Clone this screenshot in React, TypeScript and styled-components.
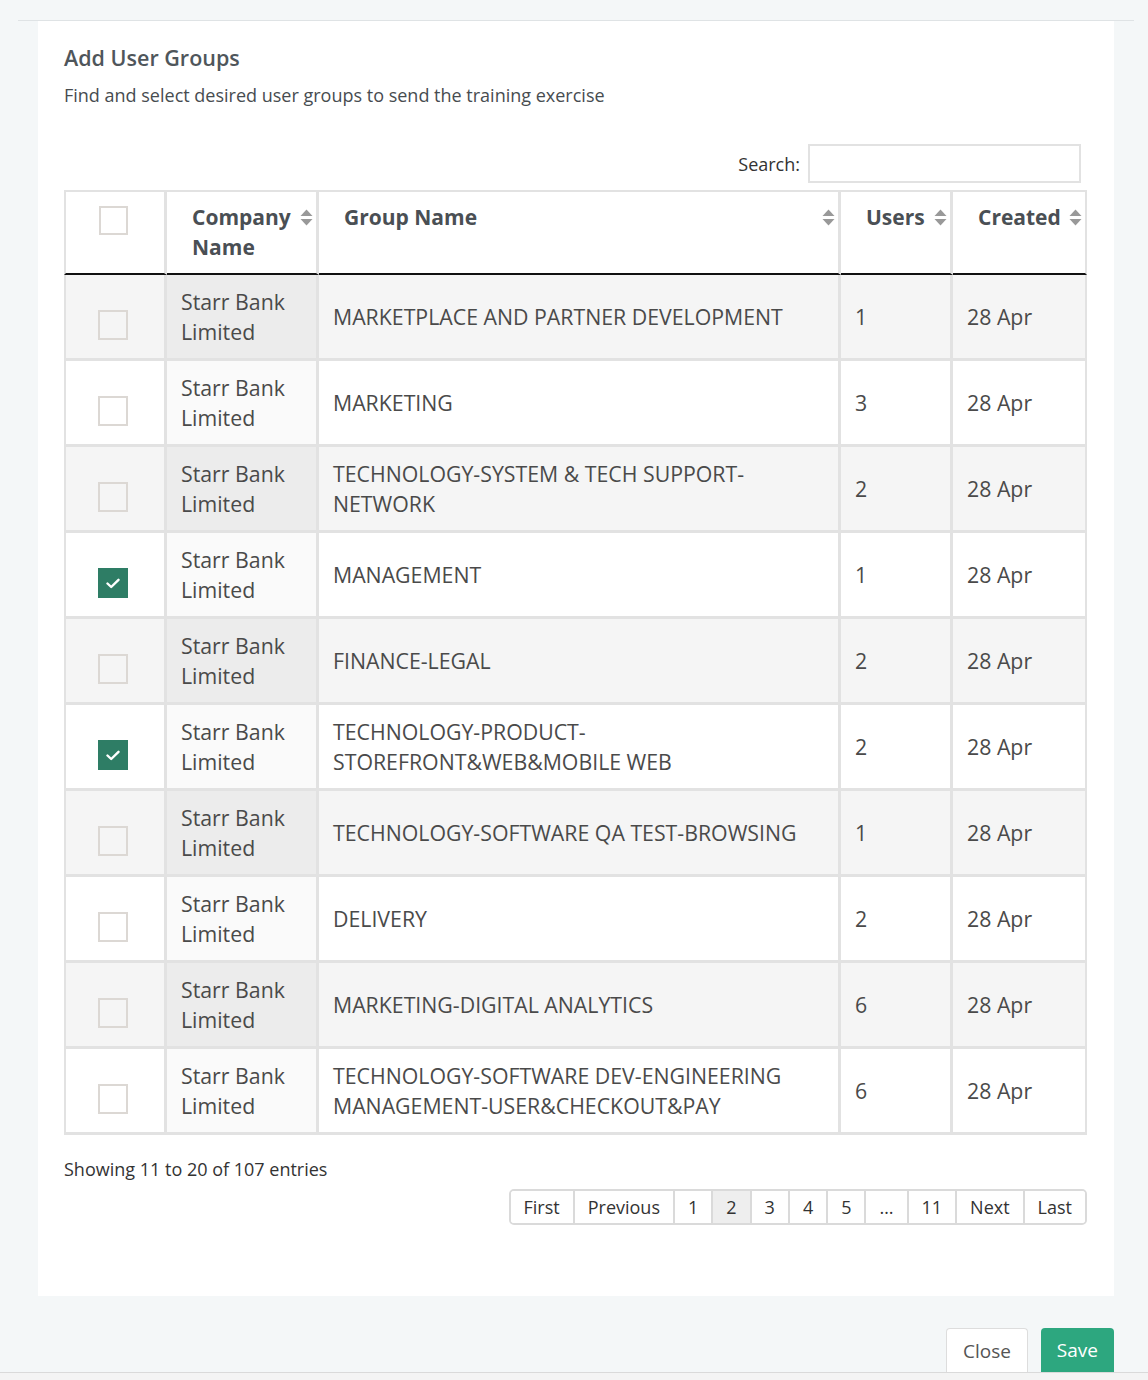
import React from "react";
import styled, { createGlobalStyle } from "styled-components";

const Global = createGlobalStyle`
  html, body { margin: 0; padding: 0; }
  body {
    background: #f4f7f8;
    font-family: "Open Sans", "Liberation Sans", sans-serif;
    color: #444;
  }
  * { box-sizing: border-box; }
`;

const Wrapper = styled.div`
  padding: 20px 14px 0 18px;
`;

const Frame = styled.div`
  border-top: 1px solid #dfe3e5;
  padding: 0 20px;
`;

const Panel = styled.div`
  background: #ffffff;
  padding: 22px 27px 71px 26px;
`;

const Title = styled.h2`
  margin: 0;
  font-size: 21.5px;
  line-height: 30px;
  font-weight: 600;
  color: #4f565b;
`;

const Subtitle = styled.p`
  margin: 10px 0 0;
  font-size: 18px;
  line-height: 24px;
  color: #474c50;
`;

const SearchRow = styled.div`
  display: flex;
  justify-content: flex-end;
  align-items: center;
  gap: 8px;
  margin-top: 37px;
  padding-right: 6px;
  font-size: 18px;
  color: #333;
`;

const SearchInput = styled.input`
  width: 273px;
  height: 39px;
  border: 2px solid #e2e2e2;
  background: #fff;
  outline: none;
  font-family: inherit;
`;

const Table = styled.table`
  margin-top: 7px;
  width: 1023px;
  table-layout: fixed;
  border-collapse: separate;
  border-spacing: 0;
  font-size: 21.3px;
`;

const Th = styled.th<{ $first?: boolean; $last?: boolean }>`
  position: relative;
  vertical-align: top;
  text-align: left;
  padding: 10px 24px 11px 25px;
  font-weight: 700;
  font-size: 21px;
  line-height: 30px;
  color: #4a4f54;
  border-top: 2px solid #e2e2e2;
  border-bottom: 2px solid #111;
  border-right: ${(p) => (p.$last ? "2px" : "3px")} solid #e2e2e2;
  border-left: ${(p) => (p.$first ? "2px solid #e2e2e2" : "none")};
`;

const CheckTh = styled(Th)`
  padding: 11px 4px 0 0;
  text-align: center;
`;

const HeadInner = styled.div`
  display: flex;
  align-items: flex-start;
  justify-content: space-between;
`;

const SortIcon = styled.svg`
  position: absolute;
  right: 3px;
  top: 17px;
`;

const Tr = styled.tr<{ $odd: boolean }>`
  background: ${(p) => (p.$odd ? "#f5f5f5" : "#ffffff")};
`;

const Td = styled.td<{ $first?: boolean; $last?: boolean; $sorted?: boolean; $odd?: boolean }>`
  vertical-align: middle;
  padding: 12px 14px 11px 14px;
  line-height: 30px;
  color: #4a4a4a;
  border-bottom: 3px solid #e2e2e2;
  border-right: ${(p) => (p.$last ? "2px" : "3px")} solid #e2e2e2;
  border-left: ${(p) => (p.$first ? "2px solid #e2e2e2" : "none")};
  background: ${(p) => (p.$sorted ? (p.$odd ? "#ececec" : "#fafafa") : "transparent")};
`;

const CheckTd = styled(Td)`
  text-align: center;
  padding: 12px 4px 11px 0;
`;

const Box = styled.span<{ $checked?: boolean; $head?: boolean }>`
  display: inline-flex;
  align-items: center;
  justify-content: center;
  width: ${(p) => (p.$head ? "29px" : "30px")};
  height: ${(p) => (p.$head ? "29px" : "30px")};
  margin-top: ${(p) => (p.$head ? "0" : "16px")};
  vertical-align: middle;
  border: ${(p) => (p.$checked ? "none" : "2px solid #dcd8d4")};
  background: ${(p) => (p.$checked ? "#2e7d65" : "transparent")};
`;

const Info = styled.div`
  margin-top: 22px;
  font-size: 18px;
  line-height: 24px;
  color: #333;
`;

const PagerRow = styled.div`
  display: flex;
  justify-content: flex-end;
  margin-top: 8px;
`;

const Pager = styled.div`
  display: flex;
  border: 2px solid #dadada;
  border-radius: 5px;
  overflow: hidden;
`;

const PageBtn = styled.span<{ $active?: boolean; $first?: boolean }>`
  display: inline-flex;
  align-items: center;
  justify-content: center;
  height: 32px;
  padding: 0 13px;
  font-size: 18px;
  color: #333;
  background: ${(p) => (p.$active ? "#eeeeee" : "#ffffff")};
  border-left: ${(p) => (p.$first ? "none" : "2px solid #dadada")};
`;

const Footer = styled.div`
  display: flex;
  justify-content: flex-end;
  align-items: flex-end;
  gap: 13px;
  height: 76px;
  padding-right: 34px;
`;

const Button = styled.button<{ $primary?: boolean }>`
  height: 44px;
  padding: 0 16px;
  font-family: inherit;
  font-size: 19px;
  border-radius: 4px 4px 0 0;
  border: ${(p) => (p.$primary ? "none" : "1px solid #dddddd")};
  border-bottom: none;
  background: ${(p) => (p.$primary ? "#2da77f" : "#ffffff")};
  color: ${(p) => (p.$primary ? "#ffffff" : "#555555")};
`;

const BottomStrip = styled.div`
  height: 8px;
  border-top: 1px solid #dadada;
  background: #f4f4f4;
`;

const Sort = () => (
  <SortIcon width="13" height="17" viewBox="0 0 13 17">
    <path d="M6.5 0.5 L12.5 7 L0.5 7 Z" fill="#999" />
    <path d="M6.5 16.5 L12.5 10 L0.5 10 Z" fill="#999" />
  </SortIcon>
);

const Check = () => (
  <svg width="14" height="11" viewBox="0 0 14 11">
    <path d="M1.5 5.5 L5.2 9 L12.5 1.8" stroke="#fff" strokeWidth="2.4" fill="none" strokeLinecap="round" strokeLinejoin="round" />
  </svg>
);

const rows = [
  { group: "MARKETPLACE AND PARTNER DEVELOPMENT", users: 1, checked: false },
  { group: "MARKETING", users: 3, checked: false },
  { group: "TECHNOLOGY-SYSTEM & TECH SUPPORT-NETWORK", users: 2, checked: false },
  { group: "MANAGEMENT", users: 1, checked: true },
  { group: "FINANCE-LEGAL", users: 2, checked: false },
  { group: "TECHNOLOGY-PRODUCT-STOREFRONT&WEB&MOBILE WEB", users: 2, checked: true },
  { group: "TECHNOLOGY-SOFTWARE QA TEST-BROWSING", users: 1, checked: false },
  { group: "DELIVERY", users: 2, checked: false },
  { group: "MARKETING-DIGITAL ANALYTICS", users: 6, checked: false },
  { group: "TECHNOLOGY-SOFTWARE DEV-ENGINEERING MANAGEMENT-USER&CHECKOUT&PAY", users: 6, checked: false },
];

const pages = ["First", "Previous", "1", "2", "3", "4", "5", "…", "11", "Next", "Last"];

export default function App() {
  return (
    <>
      <Global />
      <Wrapper>
        <Frame>
          <Panel>
            <Title>Add User Groups</Title>
            <Subtitle>Find and select desired user groups to send the training exercise</Subtitle>
            <SearchRow>
              <label>Search:</label>
              <SearchInput type="text" />
            </SearchRow>
            <Table>
              <colgroup>
                <col style={{ width: 103 }} />
                <col style={{ width: 152 }} />
                <col style={{ width: 522 }} />
                <col style={{ width: 112 }} />
                <col style={{ width: 134 }} />
              </colgroup>
              <thead>
                <tr>
                  <CheckTh $first>
                    <Box $head />
                  </CheckTh>
                  <Th>
                    <HeadInner>Company Name</HeadInner>
                    <Sort />
                  </Th>
                  <Th>
                    <HeadInner>Group Name</HeadInner>
                    <Sort />
                  </Th>
                  <Th>
                    <HeadInner>Users</HeadInner>
                    <Sort />
                  </Th>
                  <Th $last>
                    <HeadInner>Created</HeadInner>
                    <Sort />
                  </Th>
                </tr>
              </thead>
              <tbody>
                {rows.map((r, i) => {
                  const odd = i % 2 === 0;
                  return (
                    <Tr key={i} $odd={odd}>
                      <CheckTd $first>
                        <Box $checked={r.checked}>{r.checked && <Check />}</Box>
                      </CheckTd>
                      <Td $sorted $odd={odd}>Starr Bank Limited</Td>
                      <Td>{r.group}</Td>
                      <Td>{r.users}</Td>
                      <Td $last>28 Apr</Td>
                    </Tr>
                  );
                })}
              </tbody>
            </Table>
            <Info>Showing 11 to 20 of 107 entries</Info>
            <PagerRow>
              <Pager>
                {pages.map((p, i) => (
                  <PageBtn key={p} $first={i === 0} $active={p === "2"}>
                    {p}
                  </PageBtn>
                ))}
              </Pager>
            </PagerRow>
          </Panel>
        </Frame>
      </Wrapper>
      <Footer>
        <Button>Close</Button>
        <Button $primary>Save</Button>
      </Footer>
      <BottomStrip />
    </>
  );
}
